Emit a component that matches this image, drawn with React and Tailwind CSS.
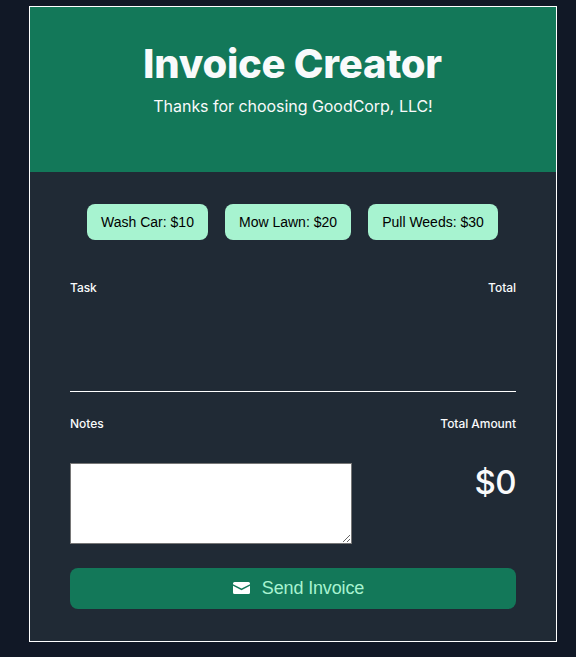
const services = ["Wash Car: $10", "Mow Lawn: $20", "Pull Weeds: $30"];
const widths = ["w-[121px]", "w-[126px]", "w-[130px]"];

export default function App() {
  return (
    <div className="h-[657px] bg-[#111826] pt-1.5 pl-[29px] font-['Inter',sans-serif] text-[#f9fafb]">
      <main className="flex h-[636px] w-[528px] flex-col border border-white bg-[#202a35]">
        <header className="h-[165px] bg-[#137859] pt-8 text-center">
          <h1 className="pr-px text-[40px] leading-[50px] font-extrabold tracking-[-0.25px]">Invoice Creator</h1>
          <p className="mt-[5px] text-base leading-6 tracking-[-0.04px]">Thanks for choosing GoodCorp, LLC!</p>
        </header>
        <section className="px-10">
          <div className="mt-8 flex justify-center gap-[17px] pr-0.5">
            {services.map((s, i) => (
              <button key={s} className={`${widths[i]} h-9 rounded-lg bg-[#a7f3d0] pl-px font-['Liberation_Sans',sans-serif] text-sm whitespace-nowrap text-black`}>{s}</button>
            ))}
          </div>
          <div className="mt-10 flex h-[112px] justify-between border-b border-white text-xs leading-4 font-medium tracking-[-0.05px]">
            <span>Task</span><span>Total</span>
          </div>
          <div className="mt-6 flex justify-between text-xs leading-4 font-medium tracking-[-0.05px]">
            <span>Notes</span><span>Total Amount</span>
          </div>
          <div className="mt-[31px] flex justify-between">
            <textarea aria-label="Notes" className="block h-[81px] w-[282px] resize border border-[#767676] bg-white text-black" />
            <span className="text-[33px] leading-[39px] font-medium tracking-[-0.6px]">$0</span>
          </div>
          <button className="mt-6 flex h-[41px] w-full items-center justify-center rounded-lg bg-[#137859] pb-px pl-[11px] font-['Liberation_Sans',sans-serif] text-lg tracking-[-0.15px] text-[#a7f3d0]">
            <svg className="mr-3 h-3 w-[17px]" viewBox="0 0 17 12" fill="white">
              <path d="M0 2.2V1.5Q0 0 1.5 0H15.5Q17 0 17 1.5V2.2L8.5 6.6Z" />
              <path d="M0 3.7L8.5 8.2L17 3.7V10.5Q17 12 15.5 12H1.5Q0 12 0 10.5Z" />
            </svg>
            Send Invoice
          </button>
        </section>
      </main>
    </div>
  );
}
